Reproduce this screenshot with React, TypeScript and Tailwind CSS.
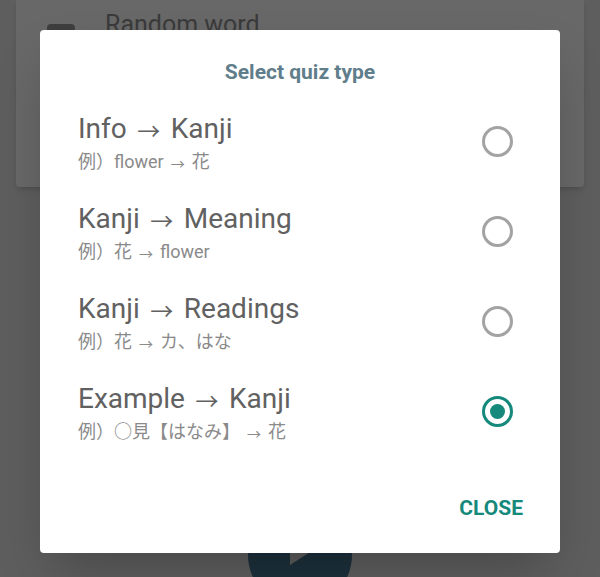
import { useState } from 'react'

const OPTIONS = [
  { from: 'Info', to: 'Kanji', sample: ['例）flower', '花'] },
  { from: 'Kanji', to: 'Meaning', sample: ['例）花', 'flower'] },
  { from: 'Kanji', to: 'Readings', sample: ['例）花', 'カ、はな'] },
  { from: 'Example', to: 'Kanji', sample: ['例）○見【はなみ】', '花'] },
]

function Arrow({ small }: { small?: boolean }) {
  return small ? (
    <span className="inline-block w-[28px] text-center text-[14px] translate-y-[1px]">→</span>
  ) : (
    <span className="inline-block w-[44px] text-center text-[23px] translate-y-[2px]">→</span>
  )
}

function Radio({ checked }: { checked: boolean }) {
  return (
    <span
      className={
        'w-[31px] h-[31px] rounded-full border-[3px] flex items-center justify-center shrink-0 ' +
        (checked ? 'border-[#15897b]' : 'border-[#a3a3a3]')
      }
    >
      {checked && <span className="w-[15px] h-[15px] rounded-full bg-[#15897b]" />}
    </span>
  )
}

export default function App() {
  const [selected, setSelected] = useState(3)

  return (
    <div
      className="relative w-[600px] h-[577px] overflow-hidden bg-[#5e5e5e]"
      style={{ fontFamily: 'Roboto, "Noto Sans CJK JP", sans-serif' }}
    >
      {/* page behind the dialog */}
      <div className="mx-4 h-[187px] bg-[#686868] rounded-b shadow-md flex items-start gap-[30px] pl-[31px]">
        <div className="w-[28px] h-[40px] mt-[24px] rounded-sm bg-[#3e3e3e]" />
        <span className="text-[25px] leading-[30px] mt-[10px] text-[#3a3a3a]">Random word</span>
      </div>

      {/* play button, mostly under the dialog */}
      <div className="absolute left-[248px] top-[503px] w-[104px] h-[104px] rounded-full bg-[#1c303b]">
        <svg className="absolute inset-0" width="104" height="104" viewBox="0 0 104 104">
          <polygon points="42,26 42,62 70,44" fill="#5c5c5c" />
        </svg>
      </div>

      {/* dialog */}
      <div className="absolute left-[40px] top-[30px] w-[520px] h-[523px] bg-white rounded-[4px] shadow-2xl flex flex-col">
        <h2 className="pt-[28px] pb-[10px] text-center text-[21px] leading-[28px] font-bold text-[#607d8b]">
          Select quiz type
        </h2>

        <div className="flex flex-col">
          {OPTIONS.map((o, i) => (
            <div
              key={i}
              onClick={() => setSelected(i)}
              className="h-[90px] flex items-center justify-between pl-[38px] pr-[47px] cursor-pointer"
            >
              <div className="flex flex-col pt-[4px]">
                <span className="text-[28px] leading-[34px] text-[#616161] flex items-baseline">
                  {o.from}
                  <Arrow />
                  {o.to}
                </span>
                <span className="mt-[3px] text-[18px] leading-[22px] text-[#8a8a8a] flex items-baseline">
                  {o.sample[0]}
                  <Arrow small />
                  {o.sample[1]}
                </span>
              </div>
              <Radio checked={selected === i} />
            </div>
          ))}
        </div>

        <div className="flex justify-end pr-[37px] pt-[40px]">
          <button className="text-[21px] leading-[24px] font-bold text-[#15897b]">CLOSE</button>
        </div>
      </div>
    </div>
  )
}
